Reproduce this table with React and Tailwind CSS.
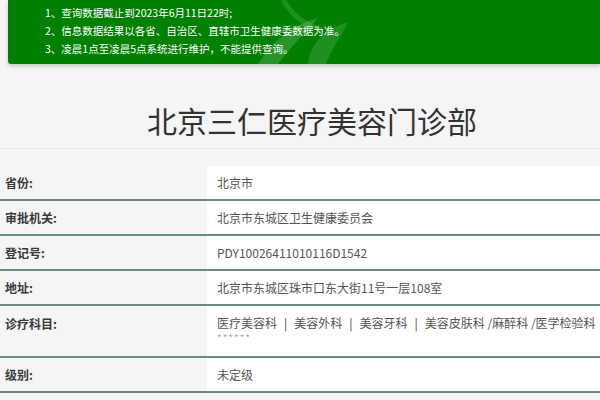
import React from "react";

const rows = [
  { label: "省份:", value: "北京市" },
  { label: "审批机关:", value: "北京市东城区卫生健康委员会" },
  { label: "登记号:", value: "PDY10026411010116D1542" },
  { label: "地址:", value: "北京市东城区珠市口东大街11号一层108室" },
];

const notes = [
  "1、查询数据截止到2023年6月11日22时;",
  "2、信息数据结果以各省、自治区、直辖市卫生健康委数据为准。",
  "3、凌晨1点至凌晨5点系统进行维护，不能提供查询。",
];

const depts = ["医疗美容科", "美容外科", "美容牙科", "美容皮肤科 /麻醉科 /医学检验科"];

const Row = ({ label, children, tall }) => (
  <div className="flex border-b-2 border-[#6a8c7c]">
    <div className={`w-[207px] shrink-0 pl-[5px] text-[12px] font-semibold text-[#3a3a3a] ${tall ? "h-[50px] pt-[9px]" : "h-[33px] flex items-center"}`}>
      {label}
    </div>
    <div className={`flex-1 bg-white pl-[10px] text-[12px] text-[#555] ${tall ? "h-[50px] pt-[8px]" : "h-[33px] flex items-center"}`}>
      {children}
    </div>
  </div>
);

const App = () => {
  return (
    <div
      className="w-[600px] h-[400px] overflow-hidden bg-[#f5f5f5]"
      style={{ fontFamily: '"Noto Sans CJK SC", "Noto Sans", sans-serif' }}
    >
      {/* notice banner */}
      <div className="ml-[8px] h-[64px] bg-[#008000] rounded-bl-[3px] shadow-[0_2px_4px_rgba(0,80,0,0.25)] pl-[37px] pt-[4px] relative overflow-hidden">
        <svg className="absolute left-[240px] top-[0px]" width="120" height="64" viewBox="0 0 120 64">
          <path d="M10 64 C25 40 45 25 70 18 C55 35 40 50 30 64 Z" fill="rgba(255,255,255,0.16)" />
          <path d="M60 64 C62 45 75 30 100 22 C92 38 82 52 78 64 Z" fill="rgba(255,255,255,0.12)" />
          <path d="M35 0 C45 15 55 25 75 30" stroke="rgba(255,255,255,0.12)" strokeWidth="5" fill="none" />
        </svg>
        {notes.map((n) => (
          <div key={n} className="relative text-[10.5px] leading-[18px] text-white">{n}</div>
        ))}
      </div>

      {/* title */}
      <div className="pt-[38px] pb-[10px] pl-[24px] border-b border-[#e6e6e6] text-center">
        <h1 className="text-[30px] leading-[36px] text-[#333] font-normal">北京三仁医疗美容门诊部</h1>
      </div>

      {/* info table */}
      <div className="mt-[17px]">
        {rows.map((r) => (
          <Row key={r.label} label={r.label}>{r.value}</Row>
        ))}
        <Row label="诊疗科目:" tall>
          <div className="flex whitespace-nowrap">
            {depts.map((d, i) => (
              <React.Fragment key={d}>
                {i > 0 && <span className="mx-[7px] text-[#444]">|</span>}
                <span>{d}</span>
              </React.Fragment>
            ))}
          </div>
          <div className="text-[10px] leading-[12px] tracking-[1px] text-[#aaa]">******</div>
        </Row>
        <Row label="级别:">未定级</Row>
      </div>
    </div>
  );
};

export default App;
